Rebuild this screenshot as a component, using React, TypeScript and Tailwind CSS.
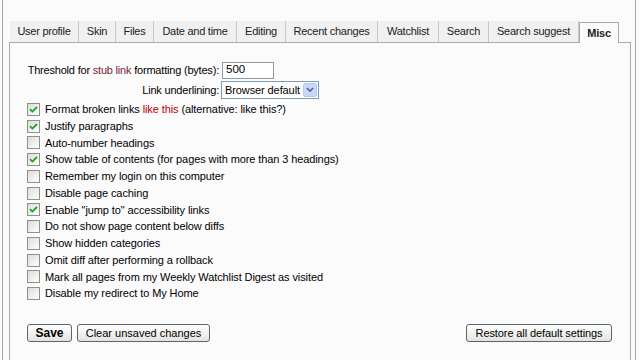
import React from "react";

const tabs: { label: string; w: number }[] = [
  { label: "User profile", w: 69 },
  { label: "Skin", w: 37 },
  { label: "Files", w: 38 },
  { label: "Date and time", w: 83 },
  { label: "Editing", w: 49 },
  { label: "Recent changes", w: 92 },
  { label: "Watchlist", w: 61 },
  { label: "Search", w: 50 },
  { label: "Search suggest", w: 90 },
];

function Check({ on }: { on: boolean }) {
  return (
    <span className="w-[13px] h-[13px] border border-[#8f8f8f] bg-gradient-to-br from-[#dcdcd7] to-[#ffffff] flex items-center justify-center shrink-0">
      {on && (
        <svg width="9" height="9" viewBox="0 0 9 9">
          <path d="M1 4.2 L3.4 6.6 L8 2" fill="none" stroke="#21a121" strokeWidth="1.8" />
        </svg>
      )}
    </span>
  );
}

const rows: { on: boolean; label: React.ReactNode }[] = [
  {
    on: true,
    label: (
      <>
        Format broken links <span className="text-[#ba0000]">like this</span> (alternative: like this?)
      </>
    ),
  },
  { on: true, label: "Justify paragraphs" },
  { on: false, label: "Auto-number headings" },
  { on: true, label: "Show table of contents (for pages with more than 3 headings)" },
  { on: false, label: "Remember my login on this computer" },
  { on: false, label: "Disable page caching" },
  { on: true, label: 'Enable "jump to" accessibility links' },
  { on: false, label: "Do not show page content below diffs" },
  { on: false, label: "Show hidden categories" },
  { on: false, label: "Omit diff after performing a rollback" },
  { on: false, label: "Mark all pages from my Weekly Watchlist Digest as visited" },
  { on: false, label: "Disable my redirect to My Home" },
];

const btn =
  "h-[18px] rounded-[3px] border border-[#5a6570] bg-gradient-to-b from-[#ffffff] to-[#e4e4de] flex items-center justify-center leading-none text-black whitespace-nowrap";

export default function App() {
  return (
    <div
      className="w-[640px] h-[360px] bg-[#fcfbfc] overflow-hidden text-black whitespace-nowrap text-[11px] tracking-[-0.1px]"
      style={{ fontFamily: '"Liberation Sans", Arial, sans-serif' }}
    >
      <div className="ml-[2px] w-[634px] h-[360px] border-l border-r border-[#a8a8a8] pl-[6px] pt-[21px]">
        {/* tabs */}
        <div className="flex pl-[1px] h-[21px] items-end">
          {tabs.map((t) => (
            <div
              key={t.label}
              className="h-[21px] bg-[#f0f0f0] border-r border-[#c8c8c8] flex items-center justify-center text-[11px] tracking-[-0.25px] text-[#222] shrink-0"
              style={{ width: t.w }}
            >
              {t.label}
            </div>
          ))}
          <div className="h-[21px] w-[40px] bg-[#fcfbfc] border-l border-t border-r border-[#aaaaaa] flex items-center justify-center text-[11px] tracking-[-0.2px] font-bold text-[#222] shrink-0 relative top-[1px]">
            Misc
          </div>
        </div>
        {/* content box */}
        <div className="w-[622px] h-[330px] border border-[#aaaaaa] bg-[#fcfbfc] pl-[17px] pt-[18px]">
          <div className="flex items-center h-[18px]">
            <span className="w-[192px] text-right tracking-[-0.2px]">
              Threshold for <span className="text-[#772233]">stub link</span> formatting (bytes):
            </span>
            <span className="ml-[3px] w-[52px] h-[17px] border border-[#8c9aa8] bg-white pl-[3px] flex items-center text-[11.5px] tracking-[0px]">
              500
            </span>
          </div>
          <div className="flex items-center h-[18px] mt-[2px]">
            <span className="w-[192px] text-right tracking-[-0.2px]">Link underlining:</span>
            <span className="ml-[2px] w-[98px] h-[18px] border border-[#7f9db9] bg-white pl-[3px] flex items-center justify-between text-[11px] tracking-[-0.1px]">
              Browser default
              <span className="w-[14px] h-[14px] mr-[1px] rounded-[2px] bg-[#c8d7f8] border border-[#b5c8ef] flex items-center justify-center">
                <svg width="8" height="6" viewBox="0 0 8 6">
                  <path d="M1 1 L4 4.2 L7 1" fill="none" stroke="#4d6185" strokeWidth="1.6" />
                </svg>
              </span>
            </span>
          </div>
          <div className="mt-[2px]">
            {rows.map((r, i) => (
              <div key={i} className="flex items-center h-[16.75px] gap-[5px]">
                <Check on={r.on} />
                <span>{r.label}</span>
              </div>
            ))}
          </div>
          <div className="flex items-center justify-between mt-[22px] pr-[18px]">
            <div className="flex gap-[5px]">
              <button className={btn + " font-bold text-[12px] tracking-[0px] w-[45px]"}>Save</button>
              <button className={btn + " w-[133px] text-[11px] tracking-[0px]"}>Clear unsaved changes</button>
            </div>
            <button className={btn + " w-[146px] text-[11px] tracking-[-0.1px]"}>Restore all default settings</button>
          </div>
        </div>
      </div>
    </div>
  );
}
